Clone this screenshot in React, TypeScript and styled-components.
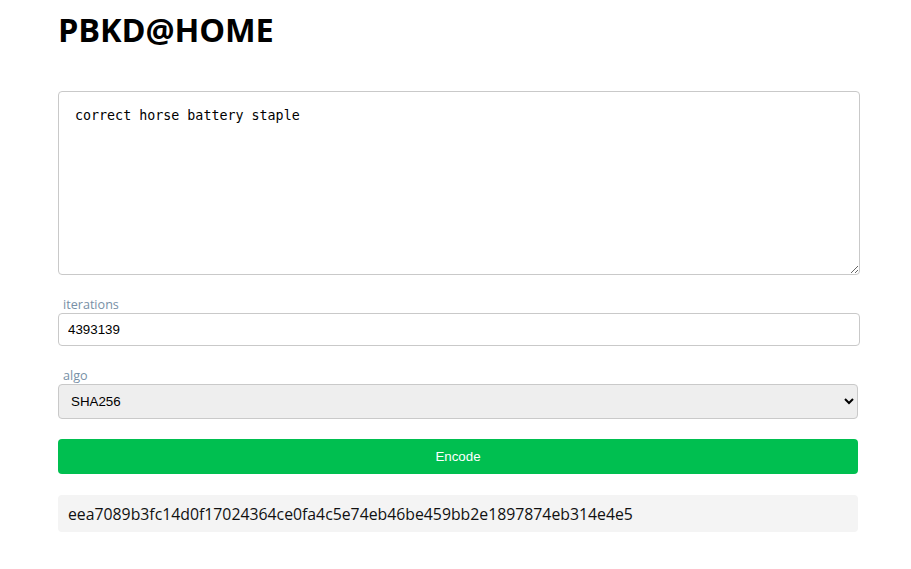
import React from "react";
import styled, { createGlobalStyle } from "styled-components";

const Global = createGlobalStyle`
  html, body { margin: 0; padding: 0; background: #fff; }
  body { font-family: "Open Sans", "DejaVu Sans", sans-serif; color: #000; }
  * { box-sizing: border-box; }
`;

const Page = styled.main`
  width: 802px;
  margin-left: 58px;
  padding-top: 11px;
  display: flex;
  flex-direction: column;
`;

const Title = styled.h1`
  margin: 0 0 42px 0;
  font-family: "Open Sans", sans-serif;
  font-weight: 700;
  font-size: 32.5px;
  line-height: 38px;
  letter-spacing: -0.1px;
`;

const TextArea = styled.textarea`
  width: 802px;
  height: 184px;
  padding: 16px 16px 15px;
  border: 1px solid #c9c9c9;
  border-radius: 4px;
  font-family: "DejaVu Sans Mono", monospace;
  font-size: 13.33px;
  line-height: 16px;
  color: #000;
  resize: both;
  margin: 0;
`;

const Field = styled.div<{ $top: number }>`
  margin-top: ${(p) => p.$top}px;
  display: flex;
  flex-direction: column;
`;

const Label = styled.label`
  font-family: "Open Sans", sans-serif;
  font-size: 12.6px;
  line-height: 14px;
  color: #7890a6;
  padding-left: 5px;
  margin-bottom: 1px;
`;

const Input = styled.input`
  width: 802px;
  height: 33px;
  padding: 0 9px;
  border: 1px solid #c9c9c9;
  border-radius: 4px;
  font-family: "Liberation Sans", Arial, sans-serif;
  font-size: 13.33px;
  color: #000;
  margin: 0;
`;

const Select = styled.select`
  width: 800px;
  height: 35px;
  padding: 0 8px;
  border: 1px solid #c9c9c9;
  border-radius: 4px;
  background: #eeeeee;
  font-family: "Liberation Sans", Arial, sans-serif;
  font-size: 13.33px;
  color: #000;
  margin: 0;
`;

const Button = styled.button`
  margin-top: 20px;
  width: 800px;
  height: 35px;
  border: none;
  border-radius: 4px;
  background: #00bf50;
  color: #fff;
  font-family: "Liberation Sans", Arial, sans-serif;
  font-size: 13.33px;
  cursor: pointer;
`;

const Result = styled.div`
  margin-top: 21px;
  width: 800px;
  height: 37px;
  padding: 0 10px;
  display: flex;
  align-items: center;
  background: #f4f4f4;
  border-radius: 4px;
  font-family: "Open Sans", sans-serif;
  font-size: 15.8px;
  color: #111;
`;

export default function App() {
  return (
    <>
      <Global />
      <Page>
        <Title>PBKD@HOME</Title>
        <TextArea defaultValue="correct horse battery staple" />
        <Field $top={23}>
          <Label>iterations</Label>
          <Input type="text" defaultValue="4393139" />
        </Field>
        <Field $top={23}>
          <Label>algo</Label>
          <Select defaultValue="SHA256">
            <option value="SHA256">SHA256</option>
            <option value="SHA512">SHA512</option>
            <option value="SHA1">SHA1</option>
          </Select>
        </Field>
        <Button>Encode</Button>
        <Result>eea7089b3fc14d0f17024364ce0fa4c5e74eb46be459bb2e1897874eb314e4e5</Result>
      </Page>
    </>
  );
}
